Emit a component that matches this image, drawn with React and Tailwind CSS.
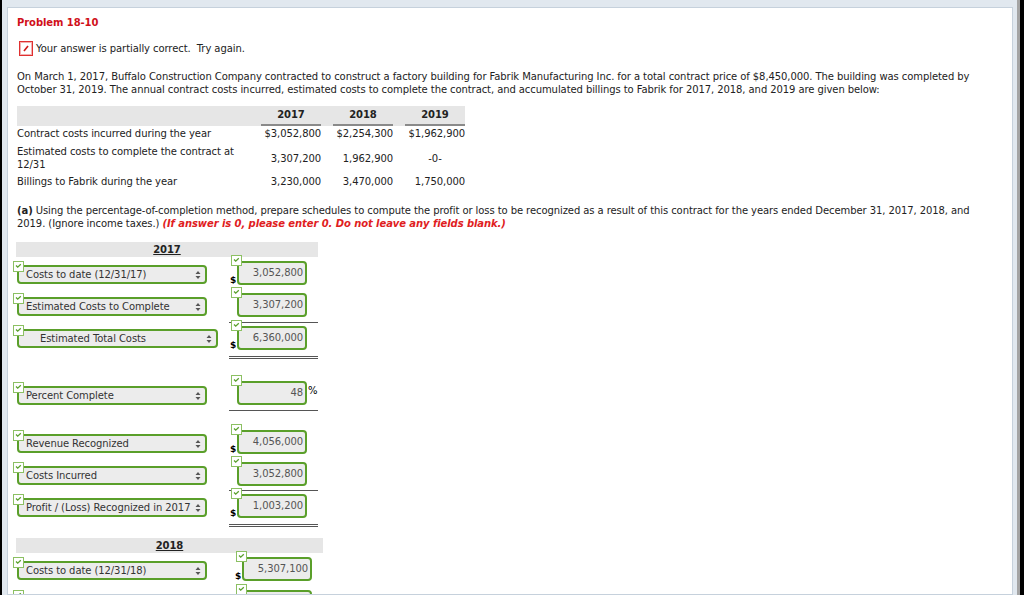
import React from 'react';

const Check = () => (
  <svg width="11" height="11" viewBox="0 0 11 11" className="absolute -left-[6px] -top-[6px]">
    <rect x="0.5" y="0.5" width="10" height="10" fill="#ffffff" stroke="#8cc063" />
    <path d="M3 4.6 L4.7 6.1 L7.8 3.2" stroke="#5aa02c" strokeWidth="1.3" fill="none" />
  </svg>
);

const Arrows = () => (
  <svg width="6" height="10" viewBox="0 0 6 10">
    <path d="M0.5 4 L3 1 L5.5 4 Z M0.5 6 L3 9 L5.5 6 Z" fill="#555555" />
  </svg>
);

const Row = ({ label, value, mt, selMt = 'mt-[4px]', selW = 'w-[190px]', selPl = 'pl-[7px]', leftW = 'w-[212px]', right = '', dollar, pct }) => (
  <div className={`flex items-start ${mt}`}>
    <div className={`${leftW} shrink-0 ${selMt}`}>
      <div className={`relative ${selW} h-[19px] border-2 border-[#5a9f2a] rounded-[4px] bg-[#ececec] flex items-center justify-between ${selPl} pr-[4px] text-[#333]`}>
        <Check />
        <span className="whitespace-nowrap">{label}</span>
        <Arrows />
      </div>
    </div>
    <div className={`w-[89px] flex shrink-0 ${right}`}>
      <div className="w-[8px] flex items-end pl-[1px] text-[9px] leading-[10px] font-bold text-black">
        {dollar ? '$' : ''}
      </div>
      <div className="relative">
        <Check />
        <div className="w-[70px] h-[24px] border-2 border-[#5a9f2a] rounded-[4px] bg-[#ececec] text-right pr-[2px] pt-[3px] text-[#555]">
          {value}
        </div>
      </div>
      {pct && <span className="mt-[3px] ml-[1px] text-black">%</span>}
    </div>
  </div>
);

const years = ['2017', '2018', '2019'];

const App = () => {
  return (
    <div className="h-[595px] overflow-hidden flex font-['DejaVu_Sans',Verdana,sans-serif] text-[10px] leading-[13px] tracking-[-0.08px] text-[#222]">
      <div className="w-[2px] shrink-0 bg-black" />
      <div className="flex-1 min-w-0 bg-[#e1e8ef] pt-[7px] pl-[5px] pr-[4px]">
        <div className="h-full overflow-hidden bg-white border border-[#c6d1dc] pl-[9px] pt-[8px]">
          <div className="font-bold text-[#d0101a]">Problem 18-10</div>

          <div className="flex items-center mt-[12px] ml-[2px]">
            <svg width="14" height="15" viewBox="0 0 14 15">
              <rect x="0.5" y="0.5" width="13" height="14" fill="#ffffff" stroke="#e03030" />
              <rect x="1.5" y="1.5" width="11" height="12" fill="none" stroke="#f3b0b0" />
              <path d="M5 10 L9 5" stroke="#d01818" strokeWidth="1.6" />
            </svg>
            <span className="ml-[3px] whitespace-pre">Your answer is partially correct.  Try again.</span>
          </div>

          <p className="mt-[14px] whitespace-nowrap">
            On March 1, 2017, Buffalo Construction Company contracted to construct a factory building for Fabrik Manufacturing Inc. for a total contract price of $8,450,000. The building was completed by
            <br />
            October 31, 2019. The annual contract costs incurred, estimated costs to complete the contract, and accumulated billings to Fabrik for 2017, 2018, and 2019 are given below:
          </p>

          <div className="mt-[10px] w-[448px]">
            <div className="grid grid-cols-[232px_60px_60px_60px] gap-x-[12px] bg-[#e6e6e6] h-[20px]">
              <div />
              {years.map((y) => (
                <div key={y} className="border-b-2 border-[#8a8a8a] text-center font-bold pt-[2px]">{y}</div>
              ))}
            </div>
            <div className="grid grid-cols-[232px_60px_60px_60px] gap-x-[12px] items-center mt-[1px]">
              <div>Contract costs incurred during the year</div>
              <div className="text-right">$3,052,800</div>
              <div className="text-right">$2,254,300</div>
              <div className="text-right">$1,962,900</div>
            </div>
            <div className="grid grid-cols-[232px_60px_60px_60px] gap-x-[12px] items-center mt-[5px]">
              <div className="whitespace-nowrap">Estimated costs to complete the contract at<br />12/31</div>
              <div className="text-right">3,307,200</div>
              <div className="text-right">1,962,900</div>
              <div className="text-center">-0-</div>
            </div>
            <div className="grid grid-cols-[232px_60px_60px_60px] gap-x-[12px] items-center mt-[4px]">
              <div>Billings to Fabrik during the year</div>
              <div className="text-right">3,230,000</div>
              <div className="text-right">3,470,000</div>
              <div className="text-right">1,750,000</div>
            </div>
          </div>

          <p className="mt-[16px] whitespace-nowrap">
            <b>(a)</b> Using the percentage-of-completion method, prepare schedules to compute the profit or loss to be recognized as a result of this contract for the years ended December 31, 2017, 2018, and
            <br />
            2019. (Ignore income taxes.) <b className="italic text-[#e0201e]">(If answer is 0, please enter 0. Do not leave any fields blank.)</b>
          </p>

          <div className="mt-[12px] ml-[-1px] w-[302px] h-[15px] leading-[15px] bg-[#e6e6e6] text-center font-bold underline">2017</div>
          <Row mt="mt-[4px]" label="Costs to date (12/31/17)" value="3,052,800" dollar />
          <Row mt="mt-[8px]" label="Estimated Costs to Complete" value="3,307,200" />
          <Row
            mt="mt-[5px]"
            selMt="mt-[7px]"
            selW="w-[201px]"
            selPl="pl-[21px]"
            right="border-t border-b-[3px] border-double border-[#555] pt-[3px] pb-[6px]"
            label="Estimated Total Costs"
            value="6,360,000"
            dollar
          />
          <Row
            mt="mt-[22px]"
            selMt="mt-[5px]"
            right="border-b border-[#555] pb-[5px]"
            label="Percent Complete"
            value="48"
            pct
          />
          <Row mt="mt-[19px]" label="Revenue Recognized" value="4,056,000" dollar />
          <Row mt="mt-[8px]" label="Costs Incurred" value="3,052,800" />
          <Row
            mt="mt-[4px]"
            selMt="mt-[8px]"
            right="border-t border-b-[3px] border-double border-[#555] pt-[3px] pb-[6px]"
            label="Profit / (Loss) Recognized in 2017"
            value="1,003,200"
            dollar
          />

          <div className="mt-[11px] ml-[-1px] w-[307px] h-[15px] leading-[15px] bg-[#e6e6e6] text-center font-bold underline">2018</div>
          <Row mt="mt-[4px]" leftW="w-[217px]" label="Costs to date (12/31/18)" value="5,307,100" dollar />
          <Row mt="mt-[9px]" leftW="w-[217px]" label="Estimated Costs to Complete" value="1,962,900" />
        </div>
      </div>
      <div className="w-[3px] shrink-0 bg-[#a4a4a4]" />
      <div className="w-[4px] shrink-0 bg-black" />
    </div>
  );
};

export default App;
